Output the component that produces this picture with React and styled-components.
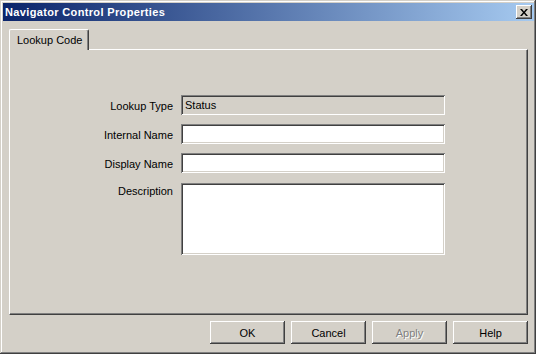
import React from 'react';
import styled, { createGlobalStyle } from 'styled-components';

const Global = createGlobalStyle`
  html, body {
    margin: 0;
    padding: 0;
    background: #d4d0c8;
  }
  body {
    font-family: "Liberation Sans", Arial, sans-serif;
    font-size: 11px;
    color: #000;
  }
`;

const Window = styled.div`
  width: 536px;
  height: 354px;
  box-sizing: border-box;
  padding: 3px 2px 2px 3px;
  display: flex;
  flex-direction: column;
  background: #d4d0c8;
  box-shadow: inset -1px -1px #404040, inset 1px 1px #d4d0c8,
    inset -2px -2px #808080, inset 2px 2px #fff;
`;

const TitleBar = styled.div`
  height: 18px;
  display: flex;
  align-items: center;
  justify-content: space-between;
  padding: 0 2px 0 2px;
  background: linear-gradient(to right, #0a246a, #a6caf0);
`;

const Title = styled.span`
  color: #fff;
  font-weight: bold;
  font-size: 11px;
  letter-spacing: 0.35px;
  white-space: nowrap;
`;

const CloseButton = styled.div`
  width: 16px;
  height: 14px;
  box-sizing: border-box;
  display: flex;
  align-items: center;
  justify-content: center;
  background: #d4d0c8;
  box-shadow: inset -1px -1px #404040, inset 1px 1px #fff,
    inset -2px -2px #808080, inset 2px 2px #d4d0c8;
`;

const Body = styled.div`
  flex: 1;
  display: flex;
  flex-direction: column;
  padding: 8px 6px 8px 6px;
  min-height: 0;
`;

const TabStrip = styled.div`
  display: flex;
`;

const Tab = styled.div`
  position: relative;
  z-index: 1;
  height: 21px;
  box-sizing: border-box;
  margin-bottom: -1px;
  padding: 0 6px 0 7px;
  display: flex;
  align-items: center;
  background: #d4d0c8;
  border-top: 1px solid #fff;
  border-left: 1px solid #fff;
  border-right: 1px solid #404040;
  border-radius: 2px 2px 0 0;
  box-shadow: inset -1px 0 #808080;
`;

const Panel = styled.div`
  flex: 1;
  box-sizing: border-box;
  border: 1px solid;
  border-color: #fff #404040 #404040 #fff;
  box-shadow: inset -1px -1px #808080;
  padding-top: 45px;
`;

const Form = styled.div`
  display: grid;
  grid-template-columns: 163px 264px;
  align-items: start;
  column-gap: 8px;
  row-gap: 9px;
`;

const Label = styled.label`
  text-align: right;
  height: ${(p) => (p.$top ? '16px' : '20px')};
  line-height: ${(p) => (p.$top ? '16px' : '22px')};
  margin-top: ${(p) => (p.$top ? '1px' : '0')};
  white-space: nowrap;
`;

const Field = styled.input`
  display: block;
  width: 264px;
  height: ${(p) => p.$h || 20}px;
  box-sizing: border-box;
  margin: 0;
  border: none;
  outline: none;
  padding: 0 4px;
  font-family: "Liberation Sans", Arial, sans-serif;
  font-size: 11px;
  color: #000;
  background: ${(p) => (p.readOnly ? '#d4d0c8' : '#fff')};
  box-shadow: inset 1px 1px #808080, inset -1px -1px #fff,
    inset 2px 2px #404040, inset -2px -2px #d4d0c8;
`;

const Area = styled(Field).attrs({ as: 'textarea' })`
  resize: none;
  margin-top: 1px;
  padding: 3px 4px;
`;

const ButtonRow = styled.div`
  display: flex;
  justify-content: flex-end;
  gap: 6px;
  margin-top: 6px;
`;

const Button = styled.button`
  width: 75px;
  height: 23px;
  box-sizing: border-box;
  margin: 0;
  padding: 0;
  border: none;
  font-family: "Liberation Sans", Arial, sans-serif;
  font-size: 11px;
  background: #d4d0c8;
  color: ${(p) => (p.disabled ? '#808080' : '#000')};
  text-shadow: ${(p) => (p.disabled ? '1px 1px #fff' : 'none')};
  box-shadow: inset -1px -1px #404040, inset 1px 1px #fff,
    inset -2px -2px #808080, inset 2px 2px #d4d0c8;
`;

export default function App() {
  return (
    <>
      <Global />
      <Window>
        <TitleBar>
          <Title>Navigator Control Properties</Title>
          <CloseButton>
            <svg width="8" height="7" viewBox="0 0 8 7">
              <path
                d="M0 0h2l2 2.5L6 0h2L5 3.5 8 7H6L4 4.5 2 7H0l3-3.5z"
                fill="#000"
              />
            </svg>
          </CloseButton>
        </TitleBar>
        <Body>
          <TabStrip>
            <Tab>Lookup Code</Tab>
          </TabStrip>
          <Panel>
            <Form>
              <Label>Lookup Type</Label>
              <Field readOnly value="Status" />
              <Label>Internal Name</Label>
              <Field defaultValue="" />
              <Label>Display Name</Label>
              <Field defaultValue="" />
              <Label $top>Description</Label>
              <Area $h={72} defaultValue="" />
            </Form>
          </Panel>
          <ButtonRow>
            <Button>OK</Button>
            <Button>Cancel</Button>
            <Button disabled>Apply</Button>
            <Button>Help</Button>
          </ButtonRow>
        </Body>
      </Window>
    </>
  );
}
